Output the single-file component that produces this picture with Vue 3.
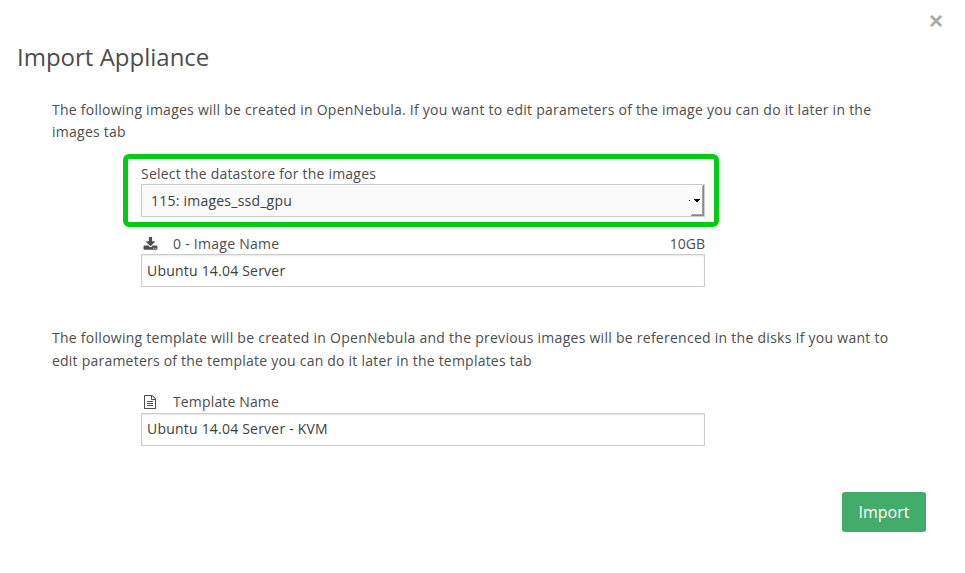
<script setup>
import { ref } from 'vue'

const datastore = ref('115: images_ssd_gpu')
const imageName = ref('Ubuntu 14.04 Server')
const templateName = ref('Ubuntu 14.04 Server - KVM')
</script>

<template>
  <main class="dialog">
    <button class="close" aria-label="Close">×</button>
    <h1 class="title">Import Appliance</h1>

    <section class="group images">
      <p class="intro">The following images will be created in OpenNebula. If you want to edit parameters of the image you can do it later in the<br>images tab</p>
      <div class="highlight">
        <div class="label">Select the datastore for the images</div>
        <div class="select">
          <span class="value">{{ datastore }}</span>
          <span class="arrow">
            <svg width="17" height="31" viewBox="0 0 17 31" shape-rendering="crispEdges">
              <path d="M4 0h13v31H4z" fill="#fdfdfd" />
              <path d="M15 1h1v29h-1zM5 29h11v1H5z" fill="#a0a0a0" />
              <path d="M16 0h1v31H4v-1h12z" fill="#8a8a8a" />
              <path d="M2 15h1v1H2zM7 14h6v1H7zM8 15h4v1H8zM9 16h2v1H9z" fill="#000" />
            </svg>
          </span>
        </div>
      </div>
      <div class="field">
        <div class="label">
          <svg class="icon" viewBox="0 0 1792 1792"><path d="M1344 1344q0-26-19-45t-45-19-45 19-19 45 19 45 45 19 45-19 19-45zm256 0q0-26-19-45t-45-19-45 19-19 45 19 45 45 19 45-19 19-45zm128-224v320q0 40-28 68t-68 28h-1472q-40 0-68-28t-28-68v-320q0-40 28-68t68-28h465l135 136q58 56 136 56t136-56l136-136h464q40 0 68 28t28 68zm-325-569q17 41-14 70l-448 448q-18 19-45 19t-45-19l-448-448q-31-29-14-70 17-39 59-39h256v-448q0-26 19-45t45-19h256q26 0 45 19t19 45v448h256q42 0 59 39z" /></svg>
          <span>0 - Image Name</span>
          <span class="size">10GB</span>
        </div>
        <input v-model="imageName" class="input" type="text">
      </div>
    </section>

    <section class="group template">
      <p class="intro">The following template will be created in OpenNebula and the previous images will be referenced in the disks If you want to<br><span class="tail">edit parameters of the template you can do it later in the templates tab</span></p>
      <div class="field">
        <div class="label">
          <svg class="icon" viewBox="0 0 1792 1792"><path d="M1596 380q28 28 48 76t20 88v1152q0 40-28 68t-68 28h-1344q-40 0-68-28t-28-68v-1600q0-40 28-68t68-28h896q40 0 88 20t76 48zm-444-244v376h376q-10-29-22-41l-313-313q-12-12-41-22zm384 1528v-1024h-416q-40 0-68-28t-28-68v-416h-768v1536h1280zm-1024-864q0-14 9-23t23-9h704q14 0 23 9t9 23v64q0 14-9 23t-23 9h-704q-14 0-23-9t-9-23v-64zm736 224q14 0 23 9t9 23v64q0 14-9 23t-23 9h-704q-14 0-23-9t-9-23v-64q0-14 9-23t23-9h704zm0 256q14 0 23 9t9 23v64q0 14-9 23t-23 9h-704q-14 0-23-9t-9-23v-64q0-14 9-23t23-9h704z" /></svg>
          <span>Template Name</span>
        </div>
        <input v-model="templateName" class="input" type="text">
      </div>
    </section>

    <button class="submit">Import</button>
  </main>
</template>

<style>
body { margin: 0; background: #fff; }
</style>

<style scoped>
* { box-sizing: border-box; }
.dialog {
  display: flex;
  flex-direction: column;
  height: 573px;
  padding: 9px 39px 0 17px;
  background: #fff;
  color: #4d4d4d;
  font: 14px/22px "Open Sans", sans-serif;
}
.close {
  align-self: flex-end;
  height: 24px;
  margin: 0 -17px 0 0;
  padding: 0;
  border: 0;
  background: none;
  color: #aaa;
  font: bold 24px/24px "Liberation Sans", sans-serif;
}
.title {
  height: 34px;
  margin: 7px 0 25px;
  font-size: 24px;
  font-weight: 400;
  line-height: 34px;
}
.group { padding-left: 35px; }
.intro { margin: 0; white-space: nowrap; letter-spacing: .25px; }
.highlight {
  width: 596px;
  height: 73px;
  margin: 11px 0 0 71px;
  padding: 5px 9px 0 13px;
  border: 5px solid #00cc14;
  border-radius: 6px;
}
.label { display: flex; align-items: center; height: 20px; letter-spacing: .21px; }
.select {
  display: flex;
  align-items: center;
  justify-content: space-between;
  width: 564px;
  height: 33px;
  padding-left: 9px;
  border: 1px solid #ccc;
  background: #fafafa;
  color: #404040;
  letter-spacing: .23px;
}
.arrow { display: flex; }
.field { width: 564px; margin: 7px 0 0 89px; }
.images .field .label { letter-spacing: .27px; }
.icon { width: 15px; height: 15px; margin: 0 15px 0 2px; fill: #4d4d4d; }
.label .size { margin-left: auto; letter-spacing: 0; }
.input {
  display: block;
  width: 564px;
  height: 33px;
  padding: 0 5px;
  border: 1px solid #ccc;
  border-radius: 0;
  outline: 0;
  background: #fff;
  box-shadow: inset 0 1px 2px rgba(0, 0, 0, .1);
  color: #404040;
  font: inherit;
  letter-spacing: .21px;
}
.template { margin-top: 39px; }
.template .intro { line-height: 23px; letter-spacing: .267px; }
.template .tail { letter-spacing: .22px; }
.template .field { margin-top: 20px; }
.template .label { height: 21px; padding-bottom: 1px; letter-spacing: .15px; }
.template .icon { width: 14px; height: 14px; margin-right: 16px; }
.template .input { padding-bottom: 2px; }
.submit {
  align-self: flex-end;
  width: 84px;
  height: 40px;
  margin-top: 46px;
  padding: 0;
  border: 0;
  border-radius: 3px;
  background: #43ac6a;
  color: #fff;
  font: 16px/40px "Open Sans", sans-serif;
}
</style>
